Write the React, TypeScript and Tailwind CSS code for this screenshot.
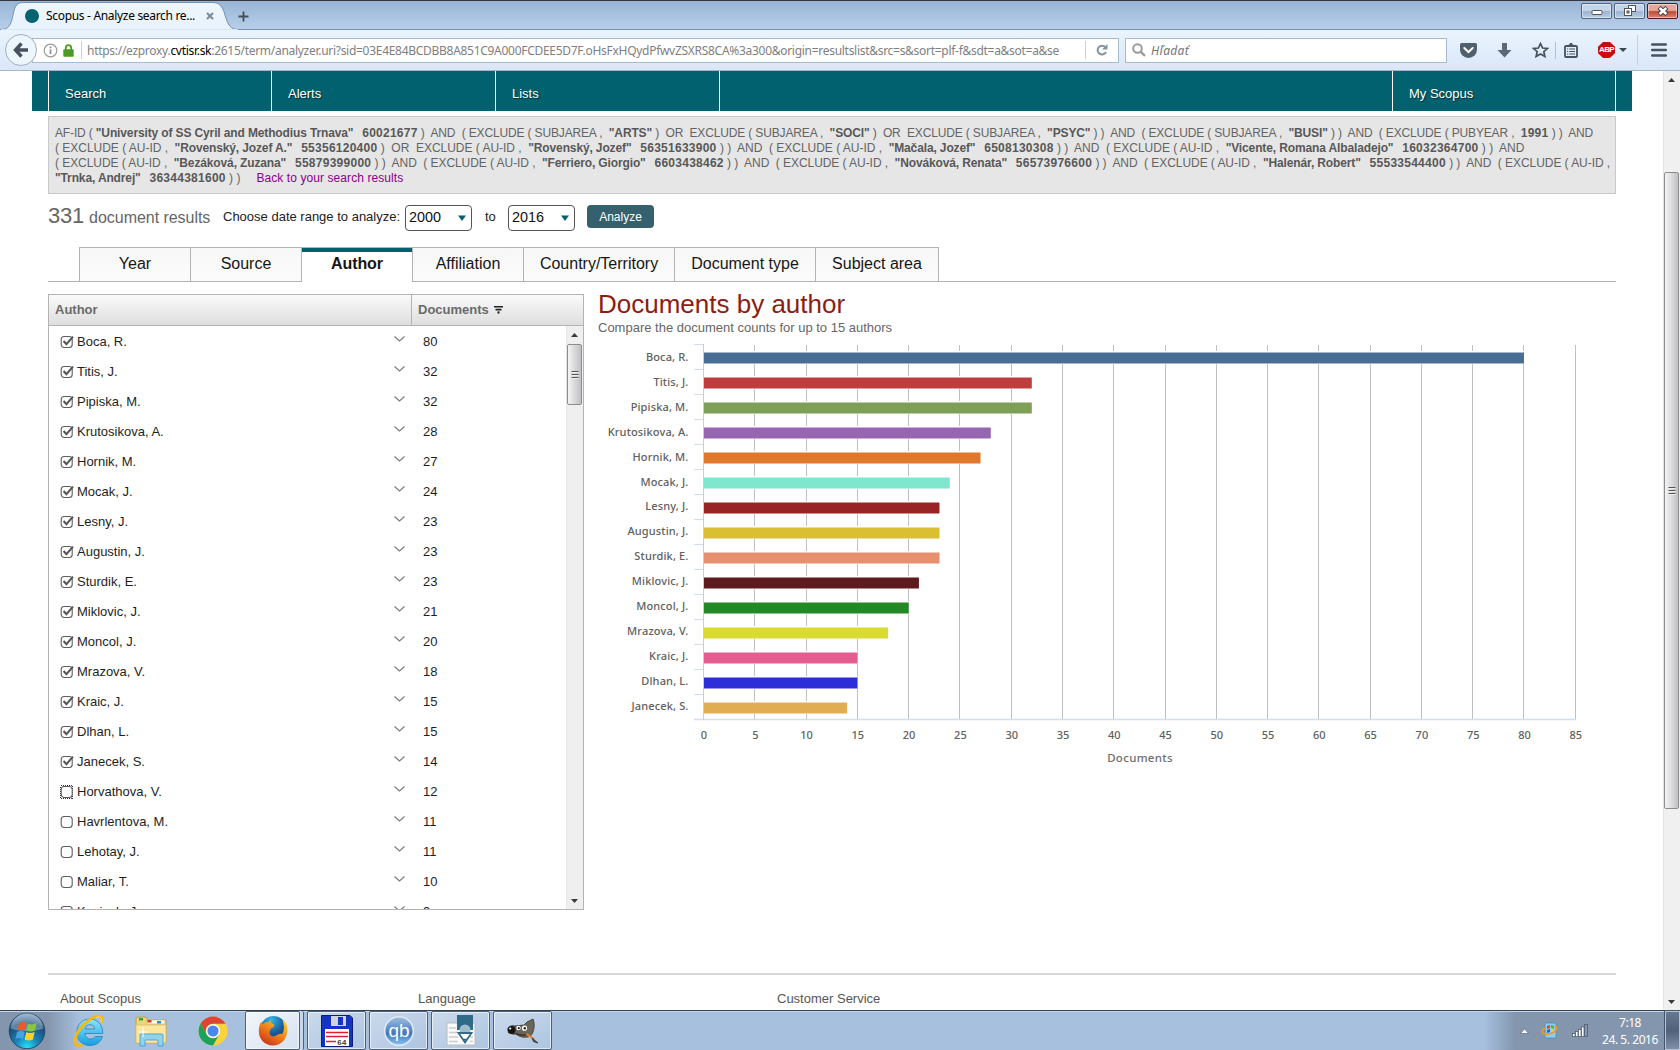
import React from "react";

const authors: { name: string; docs: number; color?: string }[] = [
  { name: "Boca, R.", docs: 80, color: "#4a6d94" },
  { name: "Titis, J.", docs: 32, color: "#c03d3d" },
  { name: "Pipiska, M.", docs: 32, color: "#7e9f56" },
  { name: "Krutosikova, A.", docs: 28, color: "#9766b0" },
  { name: "Hornik, M.", docs: 27, color: "#de782c" },
  { name: "Mocak, J.", docs: 24, color: "#7fe7ce" },
  { name: "Lesny, J.", docs: 23, color: "#992425" },
  { name: "Augustin, J.", docs: 23, color: "#d9bf31" },
  { name: "Sturdik, E.", docs: 23, color: "#e69070" },
  { name: "Miklovic, J.", docs: 21, color: "#5e1a1c" },
  { name: "Moncol, J.", docs: 20, color: "#238924" },
  { name: "Mrazova, V.", docs: 18, color: "#dadb32" },
  { name: "Kraic, J.", docs: 15, color: "#e35d91" },
  { name: "Dlhan, L.", docs: 15, color: "#2e2ed9" },
  { name: "Janecek, S.", docs: 14, color: "#e1ad52" },
  { name: "Horvathova, V.", docs: 12 },
  { name: "Havrlentova, M.", docs: 11 },
  { name: "Lehotay, J.", docs: 11 },
  { name: "Maliar, T.", docs: 10 },
  { name: "Kozisek, J.", docs: 9 },
];

/* ---------- browser chrome ---------- */

function WindowButton({ kind }: { kind: "min" | "max" | "close" }) {
  return (
    <div
      className={
        "flex h-[16px] w-[31px] items-center justify-center rounded-[2px] border shadow-[inset_0_0_0_1px_rgba(255,255,255,0.45)] " +
        (kind === "close"
          ? "border-[#4c1a22] bg-linear-to-b from-[#e7a79c] from-45% via-[#bd4a35] via-55% to-[#d98674]"
          : "border-[#52657f] bg-linear-to-b from-[#c5d5e8] from-45% via-[#9db4d1] via-55% to-[#b9cee6]")
      }
    >
      <svg width="14" height="12" viewBox="0 0 14 12">
        {kind === "min" && <rect x="2" y="5.5" width="10" height="4" rx="1" fill="#fff" stroke="#51545c" />}
        {kind === "max" && (
          <g fill="#fff" stroke="#51545c">
            <rect x="5.5" y="0.5" width="7" height="6" />
            <rect x="1.5" y="3.5" width="7" height="7" />
            <rect x="4" y="6" width="2" height="2" fill="#8ea4c0" />
          </g>
        )}
        {kind === "close" && (
          <g>
            <path d="M3 2.5L11 9.5M11 2.5L3 9.5" stroke="#4a4148" strokeWidth="4.4" />
            <path d="M3.6 3L10.4 9M10.4 3L3.6 9" stroke="#fff" strokeWidth="2.4" />
          </g>
        )}
      </svg>
    </div>
  );
}

function TabStrip() {
  return (
    <div className="relative flex h-[30px] shrink-0 items-start border-t border-b border-t-[#37383d] border-b-[#7391b1] bg-linear-to-b from-[#99b4d5] to-[#b7cfea]">
      <svg className="absolute -bottom-px left-0" width="240" height="28" viewBox="0 0 240 28">
        <defs>
          <linearGradient id="tab" x1="0" y1="0" x2="0" y2="1">
            <stop offset="0" stopColor="#eff6fc" />
            <stop offset="1" stopColor="#e8f2fc" />
          </linearGradient>
        </defs>
        <path
          d="M0 27.5 C9 27.5 11 23 13 13 C15 3 17 0.5 24 0.5 L212 0.5 C219 0.5 222 3 225 13 C228 23 230 27.5 239 27.5 L239 28 L0 28Z"
          fill="url(#tab)"
          stroke="#7391b1"
          strokeWidth="1"
        />
        <path d="M1 28H238" stroke="#e8f2fc" strokeWidth="1.6" />
      </svg>
      <div className="relative flex h-full w-full items-center pt-[2px]">
        <div className="ml-[25px] h-[14px] w-[14px] rounded-full bg-[#04646f]" />
        <div className="ml-[7px] w-[160px] text-[12px] tracking-[-0.32px] whitespace-nowrap text-black">Scopus - Analyze search re...</div>
        <svg width="8" height="8" viewBox="0 0 8 8">
          <path d="M1 1L7 7M7 1L1 7" stroke="#7f8996" strokeWidth="2" />
        </svg>
        <svg className="ml-[24px]" width="11" height="11" viewBox="0 0 11 11">
          <path d="M5.5 0.5V10.5M0.5 5.5H10.5" stroke="#424f5b" strokeWidth="1.8" />
        </svg>
      </div>
      <div className="absolute top-[2px] right-[2px] flex gap-[2px]">
        <WindowButton kind="min" />
        <WindowButton kind="max" />
        <WindowButton kind="close" />
      </div>
    </div>
  );
}

function Toolbar() {
  return (
    <div className="flex h-[41px] shrink-0 items-center border-b border-[#a3b6cb] bg-linear-to-b from-[#eaf4fd] to-[#dae7f8]">
      <div className="z-10 ml-[5px] flex h-[32px] w-[32px] items-center justify-center rounded-full border border-[#9fb0c3] bg-[#edf5fd]">
        <svg width="16" height="16" viewBox="0 0 16 16">
          <path d="M8.5 1.5L2.5 8L8.5 14.5M3 8H15" fill="none" stroke="#46515d" strokeWidth="3.4" />
        </svg>
      </div>
      <div className="-ml-[5px] flex h-[25px] w-[1087px] items-center border border-[#a6bad0] bg-white">
        <svg className="ml-[10px]" width="15" height="15" viewBox="0 0 15 15">
          <circle cx="7.5" cy="7.5" r="6.3" fill="none" stroke="#9a9a9a" strokeWidth="1.2" />
          <path d="M7.5 6.6V11M7.5 3.6V5.2" stroke="#8c8c8c" strokeWidth="1.7" />
        </svg>
        <svg className="ml-[5px]" width="11" height="13" viewBox="0 0 11 13">
          <path d="M2.8 6V3.8a2.7 2.7 0 0 1 5.4 0V6" fill="none" stroke="#4d9b25" strokeWidth="1.8" />
          <rect x="0.3" y="5.3" width="10.4" height="7.4" rx="1" fill="#4d9b25" />
        </svg>
        <div className="ml-[7px] h-[18px] w-px bg-[#cfcfcf]" />
        <div className="ml-[5px] w-[998px] pt-[2px] text-[12px] tracking-[-0.287px] whitespace-nowrap text-[#808080]">
          https://ezproxy.<span className="text-black">cvtisr.sk</span>:2615/term/analyzer.uri?sid=03E4E84BCDBB8A851C9A000FCDEE5D7F.oHsFxHQydPfwvZSXRS8CA%3a300&amp;origin=resultslist&amp;src=s&amp;sort=plf-f&amp;sdt=a&amp;sot=a&amp;se
        </div>
        <div className="h-[18px] w-px bg-[#cfcfcf]" />
        <svg className="ml-[10px]" width="12" height="12" viewBox="0 0 12 12">
          <path d="M9.4 3.2A4.4 4.4 0 1 0 10 8" fill="none" stroke="#8393a1" strokeWidth="2" />
          <path d="M11.5 0V5.5H6Z" fill="#8393a1" />
        </svg>
      </div>
      <div className="ml-[6px] flex h-[25px] w-[322px] items-center border border-[#a6bad0] bg-white">
        <svg className="ml-[6px]" width="14" height="14" viewBox="0 0 14 14">
          <circle cx="5.5" cy="5.5" r="4.3" fill="none" stroke="#9b9b9b" strokeWidth="2" />
          <path d="M8.6 8.6L13 13" stroke="#9b9b9b" strokeWidth="2.4" />
        </svg>
        <span className="ml-[5px] pt-[2px] text-[12px] tracking-[0.3px] text-[#757575] italic">Hľadať</span>
      </div>
      <svg className="ml-[13px]" width="17" height="15" viewBox="0 0 17 15">
        <path d="M1.5 0H15.5Q17 0 17 1.5V6.5A8.5 8.5 0 0 1 0 6.5V1.5Q0 0 1.5 0Z" fill="#51606e" />
        <path d="M4.3 5L8.5 9L12.7 5" fill="none" stroke="#fff" strokeWidth="2" strokeLinecap="round" />
      </svg>
      <svg className="ml-[20px]" width="15" height="15" viewBox="0 0 15 15">
        <path d="M5 0H10V7H14.5L7.5 14.5L0.5 7H5Z" fill="#5b6875" />
      </svg>
      <svg className="ml-[20px]" width="17" height="16" viewBox="0 0 17 16">
        <path d="M8.5 1.6L10.6 6L15.4 6.5L11.8 9.7L12.9 14.5L8.5 12L4.1 14.5L5.2 9.7L1.6 6.5L6.4 6Z" fill="none" stroke="#46535f" strokeWidth="1.7" />
      </svg>
      <div className="ml-[6px] h-[17px] w-px bg-[#b3bfcc]" />
      <svg className="ml-[8px]" width="14" height="15" viewBox="0 0 14 15">
        <rect x="1" y="3" width="12" height="11" rx="1" fill="none" stroke="#46535f" strokeWidth="1.8" />
        <path d="M4.5 3V1.5H5.5L6 0H8L8.5 1.5H9.5V3Z" fill="#46535f" />
        <path d="M3 6H4.2M5.3 6H11M3 8.5H4.2M5.3 8.5H11M3 11H4.2M5.3 11H11" stroke="#46535f" strokeWidth="1.2" />
      </svg>
      <div className="ml-[20px] flex h-[16px] w-[17px] items-center justify-center bg-[#c70d0d] [clip-path:polygon(30%_0,70%_0,100%_30%,100%_70%,70%_100%,30%_100%,0_70%,0_30%)]">
        <span className="font-[Liberation_Sans,Arial,sans-serif] text-[8px] font-bold tracking-[-0.6px] text-white">ABP</span>
      </div>
      <svg className="ml-[4px]" width="8" height="4" viewBox="0 0 8 4">
        <path d="M0 0H8L4 4Z" fill="#3c4650" />
      </svg>
      <div className="ml-[10px] h-[30px] w-px bg-[#c3d0de]" />
      <svg className="ml-[13px]" width="16" height="14" viewBox="0 0 16 14">
        <path d="M1.2 1.5H14.8M1.2 7H14.8M1.2 12.5H14.8" stroke="#46525e" strokeWidth="2.6" strokeLinecap="round" />
      </svg>
    </div>
  );
}

/* ---------- page content ---------- */

function NavBar() {
  return (
    <div className="ml-[32px] flex h-[40px] w-[1600px] items-center bg-[#02616e] pl-[16px] text-[13px] text-white [text-shadow:1px_1px_1px_#003038]">
      <div className="flex h-full w-[223px] shrink-0 items-center border-l border-white pt-[5px] pl-[16px]">Search</div>
      <div className="flex h-full w-[224px] shrink-0 items-center border-l border-white pt-[5px] pl-[16px]">Alerts</div>
      <div className="flex h-full w-[224px] shrink-0 items-center border-l border-white pt-[5px] pl-[16px]">Lists</div>
      <div className="h-full w-[673px] shrink-0 border-l border-white" />
      <div className="flex h-full w-[224px] shrink-0 items-center border-r border-l border-white pt-[5px] pl-[16px]">My Scopus</div>
    </div>
  );
}

/* Quoted search term, optionally followed by its numeric identifier. */
function Term({ name, id }: { name?: string; id?: string }) {
  return (
    <b className="text-[#585858]">
      {name && <span className="tracking-[-0.13px]">{'"' + name + '"'}</span>}
      {name && id && <span className="tracking-[-0.4px]">{"   "}</span>}
      {id && <span className="tracking-[0.26px]">{id}</span>}
    </b>
  );
}

function Query() {
  return (
    <div className="mt-[5px] ml-[48px] h-[78px] w-[1568px] border border-[#c9c9c9] bg-[#e6e6e6] pt-[9px] pl-[6px] text-[12px] leading-[15px] whitespace-pre text-[#646464]">
      <div className="tracking-[-0.15px]">
        {"AF-ID ( "}<Term name="University of SS Cyril and Methodius Trnava" id="60021677" />{" )  AND  ( EXCLUDE ( SUBJAREA ,  "}<Term name="ARTS" />
        {" )  OR  EXCLUDE ( SUBJAREA ,  "}<Term name="SOCI" />{" )  OR  EXCLUDE ( SUBJAREA ,  "}<Term name="PSYC" />{" ) )  AND  ( EXCLUDE ( SUBJAREA ,  "}
        <Term name="BUSI" />{" ) )  AND  ( EXCLUDE ( PUBYEAR ,  "}<Term id="1991" />{" ) )  AND"}
      </div>
      <div className="tracking-[-0.02px]">
        {"( EXCLUDE ( AU-ID ,  "}<Term name="Rovenský, Jozef A." id="55356120400" />{" )  OR  EXCLUDE ( AU-ID ,  "}<Term name="Rovenský, Jozef" id="56351633900" />
        {" ) )  AND  ( EXCLUDE ( AU-ID ,  "}<Term name="Mačala, Jozef" id="6508130308" />{" ) )  AND  ( EXCLUDE ( AU-ID ,  "}
        <Term name="Vicente, Romana Albaladejo" id="16032364700" />{" ) )  AND"}
      </div>
      <div className="tracking-[-0.06px]">
        {"( EXCLUDE ( AU-ID ,  "}<Term name="Bezáková, Zuzana" id="55879399000" />{" ) )  AND  ( EXCLUDE ( AU-ID ,  "}<Term name="Ferriero, Giorgio" id="6603438462" />
        {" ) )  AND  ( EXCLUDE ( AU-ID ,  "}<Term name="Nováková, Renata" id="56573976600" />{" ) )  AND  ( EXCLUDE ( AU-ID ,  "}
        <Term name="Halenár, Robert" id="55533544400" />{" ) )  AND  ( EXCLUDE ( AU-ID ,"}
      </div>
      <div>
        <Term name="Trnka, Andrej" id="36344381600" />{" ) )"}
        <span className="ml-[16px] tracking-[0.08px] text-[#8b008b]">Back to your search results</span>
      </div>
    </div>
  );
}

function YearSelect({ value }: { value: string }) {
  return (
    <div className="flex h-[26px] w-[67px] items-center justify-between rounded-[4px] border border-[#555] bg-white pr-[5px] pl-[3px] text-[14.4px] text-[#111]">
      {value}
      <svg width="8" height="6" viewBox="0 0 8 6">
        <path d="M0 0.5H8L4 6Z" fill="#02616e" />
      </svg>
    </div>
  );
}

function DateRange() {
  return (
    <div className="mt-[11px] ml-[48px] flex h-[26px] items-center text-[13px] text-[#222]">
      <div className="-mt-[6px] flex w-[175px] items-baseline text-[#666]">
        <span className="text-[22px] tracking-[-0.2px]">331</span>
        <span className="ml-[5px] text-[16px] tracking-[-0.04px] whitespace-nowrap">document results</span>
      </div>
      <span className="-mt-[2px] w-[182px] whitespace-nowrap">Choose date range to analyze:</span>
      <YearSelect value="2000" />
      <span className="-mt-[2px] w-[36px] pl-[13px]">to</span>
      <YearSelect value="2016" />
      <div className="-mt-[3px] ml-[12px] flex h-[23px] w-[67px] items-center justify-center rounded-[4px] bg-[#34616d] text-[12px] text-white">Analyze</div>
    </div>
  );
}

const tabs: { label: string; width: string; active?: boolean }[] = [
  { label: "Year", width: "w-[111px]" },
  { label: "Source", width: "w-[111px]" },
  { label: "Author", width: "w-[111px]", active: true },
  { label: "Affiliation", width: "w-[111px]" },
  { label: "Country/Territory", width: "w-[151px]" },
  { label: "Document type", width: "w-[141px]" },
  { label: "Subject area", width: "w-[123px]" },
];

function Tabs() {
  return (
    <div className="mt-[16px] ml-[48px] flex h-[35px] w-[1568px]">
      <div className="w-[31px] border-b border-[#b3b3b3]" />
      {tabs.map((t) => (
        <div
          key={t.label}
          className={
            "flex items-center justify-center border-l border-[#b3b3b3] text-[16px] text-[#161616] " +
            t.width +
            (t.active
              ? " border-t border-t-[#b3b3b3] pb-[3px] font-bold tracking-[-0.1px] shadow-[inset_0_4px_0_#02616e]"
              : " border-t border-b bg-linear-to-b from-[#f7f7f7] to-[#fbfbfb] pb-[2px]")
          }
        >
          {t.label}
        </div>
      ))}
      <div className="flex-1 border-b border-l border-[#b3b3b3]" />
    </div>
  );
}

function CheckBox({ checked, focused }: { checked: boolean; focused: boolean }) {
  return (
    <svg width="14" height="14" viewBox="0 0 14 14">
      {focused && <rect x="0.5" y="0.5" width="12" height="13" fill="none" stroke="#333" strokeDasharray="1 1" shapeRendering="crispEdges" />}
      <rect x="1.2" y="1.5" width="11" height="11" rx="3" fill="#fff" stroke="#5e5e5e" strokeWidth="1.1" />
      {checked && <path d="M3.6 6L6.4 9.2L13 1.6" fill="none" stroke="#555" strokeWidth="2" />}
    </svg>
  );
}

function Arrow({ down }: { down?: boolean }) {
  return (
    <svg width="7" height="4" viewBox="0 0 7 4">
      <path d={down ? "M0 0H7L3.5 4Z" : "M0 4H7L3.5 0Z"} fill="#3a3a3a" />
    </svg>
  );
}

function Grip() {
  return (
    <svg width="8" height="8" viewBox="0 0 8 8">
      <path d="M0.5 0.5H7.5M0.5 3.5H7.5M0.5 6.5H7.5" stroke="#555" />
      <path d="M0.5 1.5H7.5M0.5 4.5H7.5M0.5 7.5H7.5" stroke="#eee" />
    </svg>
  );
}

function AuthorTable() {
  return (
    <div className="flex h-[616px] w-[536px] flex-col border border-[#b3b3b3] bg-white">
      <div className="flex h-[31px] shrink-0 border-b border-[#b3b3b3] bg-linear-to-b from-[#fafafa] to-[#dedede] text-[13px] font-bold text-[#6a6a6a]">
        <div className="flex w-[363px] items-center border-r border-[#b3b3b3] pl-[6px]">Author</div>
        <div className="flex items-center gap-[5px] pl-[6px]">
          Documents
          <svg width="9" height="8" viewBox="0 0 9 8">
            <path d="M0 0.8H9M1.5 3.6H7.5" stroke="#222" strokeWidth="1.6" />
            <path d="M3.5 5.4H5.5V7.6H3.5Z" fill="#222" />
          </svg>
        </div>
      </div>
      <div className="flex min-h-0 flex-1">
        <div className="min-w-0 flex-1 overflow-hidden text-[13px] text-[#1e1e1e]">
          {authors.map((a, i) => (
            <div key={a.name} className="flex h-[30px] items-center">
              <div className="ml-[11px] pt-[1px]">
                <CheckBox checked={i < 15} focused={i === 15} />
              </div>
              <span className="ml-[3px] w-[317px] pt-[2px]">{a.name}</span>
              <svg className="-mt-[5px]" width="11" height="6" viewBox="0 0 11 6">
                <path d="M0.5 0.5L5.5 5L10.5 0.5" fill="none" stroke="#7c7c7c" strokeWidth="1.2" />
              </svg>
              <span className="ml-[18px] pt-[2px]">{a.docs}</span>
            </div>
          ))}
        </div>
        <div className="flex w-[17px] flex-col items-center border-l border-[#e6e6e6] bg-[#efefef] pr-px">
          <div className="flex h-[18px] items-center">
            <Arrow />
          </div>
          <div className="flex h-[61px] w-[15px] items-center justify-center rounded-[2px] border border-[#8d8d8d] bg-linear-to-r from-[#f4f4f4] via-[#d9d9db] to-[#c0c0c4]">
            <Grip />
          </div>
          <div className="flex-1" />
          <div className="flex h-[17px] items-center">
            <Arrow down />
          </div>
        </div>
      </div>
    </div>
  );
}

const AXIS_X = 105.5;
const UNIT = 10.256;
const CHART_TOP = 0.5;

function Chart() {
  const ticks = Array.from({ length: 18 }, (_, i) => i * 5);
  return (
    <svg className="mt-[8px] block font-[Noto_Sans,sans-serif] text-[11px]" width="1018" height="425" viewBox="0 0 1018 425">
      {ticks.slice(1).map((t) => (
        <path key={t} d={`M${Math.round(AXIS_X - 0.5 + t * UNIT) + 0.5} 1V376`} stroke="#c0c0c0" />
      ))}
      {authors.slice(0, 15).map((a, i) => {
        const y = CHART_TOP + i * 25;
        return (
          <g key={a.name}>
            <path d={`M96 ${y}H105`} stroke="#d3dfec" strokeWidth="1.2" />
            <rect x={AXIS_X} y={y + 6.5} width={a.docs * UNIT} height="13" fill="#fff" />
            <rect x={AXIS_X} y={y + 7.5} width={a.docs * UNIT} height="12" fill={a.color} opacity="0.5" />
            <rect x={AXIS_X} y={y + 8.5} width={a.docs * UNIT} height="10" fill={a.color} />
            <text x="90.5" y={y + (i < 6 ? 16 : 15)} textAnchor="end" fill="#606060" fontWeight="500" letterSpacing="0.15">
              {a.name}
            </text>
          </g>
        );
      })}
      <path d="M96 375.5H978" stroke="#d3dfec" strokeWidth="1.4" />
      <path d={`M${AXIS_X} 0V376`} stroke="#c0d0e0" />
      {ticks.map((t) => (
        <text key={t} x={AXIS_X + 0.5 + t * UNIT} y="395" textAnchor="middle" fill="#606060" fontWeight="500">
          {t}
        </text>
      ))}
      <text x="542" y="418" textAnchor="middle" fill="#6d6d6d" fontSize="11.5" fontWeight="500" letterSpacing="0.3">
        Documents
      </text>
    </svg>
  );
}

function PageScrollbar() {
  return (
    <div className="flex w-[17px] shrink-0 flex-col items-center border-l border-[#e4e4e4] bg-[#f0f0f0] pr-px">
      <div className="flex h-[18px] items-center">
        <Arrow />
      </div>
      <div className="mt-[83px] flex h-[637px] w-[15px] items-center justify-center rounded-[2px] border border-[#8d8d8d] bg-linear-to-r from-[#f4f4f4] via-[#dcdcde] to-[#c0c0c4]">
        <Grip />
      </div>
      <div className="flex-1" />
      <div className="flex h-[17px] items-center">
        <Arrow down />
      </div>
    </div>
  );
}

function Page() {
  return (
    <div className="flex min-h-0 flex-1 bg-white font-[Liberation_Sans,Arial,sans-serif]">
      <div className="flex min-w-0 flex-1 flex-col overflow-hidden">
        <NavBar />
        <Query />
        <DateRange />
        <Tabs />
        <div className="mt-[12px] ml-[48px] flex">
          <AuthorTable />
          <div className="ml-[14px]">
            <h1 className="-mt-[6px] h-[30px] text-[26px] leading-[32px] text-[#8c1d12]">Documents by author</h1>
            <p className="mt-[2px] h-[16px] text-[13px] leading-[16px] text-[#666]">Compare the document counts for up to 15 authors</p>
            <Chart />
          </div>
        </div>
        <div className="mt-[63px] ml-[48px] flex w-[1568px] border-t-2 border-[#d9d9d9] pt-[14px] pl-[12px] text-[13px] text-[#555]">
          <span className="w-[358px]">About Scopus</span>
          <span className="w-[359px]">Language</span>
          <span>Customer Service</span>
        </div>
      </div>
      <PageScrollbar />
    </div>
  );
}

/* ---------- task bar ---------- */

function StartOrb() {
  return (
    <svg width="38" height="38" viewBox="0 0 38 38">
      <defs>
        <radialGradient id="orb" cx="0.5" cy="0.95" r="0.9">
          <stop offset="0" stopColor="#1fe2fb" />
          <stop offset="0.35" stopColor="#1b86b8" />
          <stop offset="0.75" stopColor="#1a4a78" />
          <stop offset="1" stopColor="#6c94b8" />
        </radialGradient>
      </defs>
      <circle cx="19" cy="19" r="17.8" fill="url(#orb)" stroke="#29486a" />
      <path d="M3 17A16 16 0 0 1 35 17Q19 21 3 17Z" fill="#fff" opacity="0.3" />
      <path d="M11 11.5Q14.5 9 18.5 11L17 18.3Q13 16.5 9.3 18.5Z" fill="#ee5a24" />
      <path d="M20 11.7Q24 13.5 28.5 11L27 18.3Q23 20.5 18.5 18.6Z" fill="#8cc63e" />
      <path d="M9 20Q12.8 18 16.6 20L15 27Q11 25 7.5 27Z" fill="#45a3e5" />
      <path d="M18.2 20.3Q22.5 22 26.6 20L25 27.5Q21 29.3 16.6 27.4Z" fill="#fdd12f" />
    </svg>
  );
}

function ExplorerE() {
  return (
    <svg width="32" height="34" viewBox="0 0 32 34">
      <defs>
        <linearGradient id="ie" x1="0" y1="0" x2="0" y2="1">
          <stop offset="0" stopColor="#8fe3fb" />
          <stop offset="1" stopColor="#169fe0" />
        </linearGradient>
      </defs>
      <path
        d="M16.5 5C24 5 29.8 10 29.8 19.5H12C12.3 23 14.5 25 17.5 25C20 25 21.5 24 22.3 22.5H29.5C27.8 28.5 23 31.5 17 31.5C9 31.5 3.8 26 3.8 18.3C3.8 10.5 9.3 5 16.5 5ZM12.2 15H21.7C21.3 12 19.6 10.7 17 10.7C14.4 10.7 12.7 12.2 12.2 15Z"
        fill="url(#ie)"
        stroke="#2584bc"
        strokeWidth="0.8"
      />
      <path d="M28.5 8.5C30.5 4 28 1 23 2.5C14 5.5 3.5 16.5 2 26C1.3 31.5 5 33 9.5 30.5" fill="none" stroke="#f5b90f" strokeWidth="2.8" />
      <path d="M28 8C29.5 4 27 2 23 3.5" fill="none" stroke="#ffe36b" strokeWidth="1" />
    </svg>
  );
}

function FolderIcon() {
  return (
    <svg width="34" height="32" viewBox="0 0 34 32">
      <path d="M2 4L3 2H12L14 5H32V26Q32 28 30 28H3Q2 28 2 26Z" fill="#efd47c" stroke="#c3a04b" />
      <path d="M13 5H31V9H13Z" fill="#fff" stroke="#c9b778" strokeWidth="0.8" />
      <rect x="5" y="3" width="4" height="2.5" fill="#1faf3a" />
      <rect x="13.5" y="5" width="4" height="2.5" fill="#d63a2a" />
      <rect x="23" y="6" width="4" height="2.5" fill="#2a8fe0" />
      <path d="M2 10H32V26Q32 28 30 28H3Q2 28 2 26Z" fill="#f9e7a0" stroke="#d9bf6a" strokeWidth="0.8" />
      <path d="M6 31V20Q6 19 7 19H28Q29 19 29 20V31H24V26Q24 25 23 25H12Q11 25 11 26V31Z" fill="#8fd3ee" stroke="#4d9fc4" strokeWidth="0.9" />
      <path d="M9 12V22M4.5 17H14" stroke="#fff" strokeWidth="1" />
    </svg>
  );
}

function ChromeIcon() {
  return (
    <svg width="30" height="30" viewBox="0 0 30 30">
      <circle cx="15" cy="15" r="14.5" fill="#fdd23f" />
      <path d="M2.45 7.75A14.5 14.5 0 0 1 27.55 7.75H15A7.25 7.25 0 0 0 8.7 18.6Z" fill="#dc4434" />
      <path d="M2.45 7.75A14.5 14.5 0 0 0 15 29.5L21.3 18.6A7.25 7.25 0 0 1 8.7 18.6Z" fill="#1ba25c" />
      <circle cx="15" cy="15" r="7" fill="#fff" />
      <circle cx="15" cy="15" r="5.6" fill="#4a86ee" />
    </svg>
  );
}

function FirefoxIcon() {
  return (
    <svg width="30" height="31" viewBox="0 0 30 31">
      <defs>
        <linearGradient id="fx" x1="0.9" y1="0" x2="0.2" y2="1">
          <stop offset="0" stopColor="#fcd52d" />
          <stop offset="0.45" stopColor="#f38a1c" />
          <stop offset="1" stopColor="#c92e1a" />
        </linearGradient>
        <radialGradient id="globe" cx="0.4" cy="0.15" r="0.9">
          <stop offset="0" stopColor="#32b7e6" />
          <stop offset="0.6" stopColor="#1b5793" />
          <stop offset="1" stopColor="#162a63" />
        </radialGradient>
      </defs>
      <circle cx="15.5" cy="14" r="13" fill="url(#globe)" />
      <path
        d="M26.5 6C29 9 29.7 12 29.4 16.5C28.5 25 22.5 30.5 15 30.5C6.5 30.5 0.8 24 0.8 16C0.8 12 2 9 3 6.5L4.5 9.3C6 7.5 8 7 10.5 7.3L12.7 5C12.7 7 13.5 8.6 16 9.5C17 11 16 12 13 13.5C12 14.5 12.5 15.5 11.5 16.5C11 20 14 22 17 21C20 20 21 18 24 19C26.5 15.5 26.5 11 24.5 5Z"
        fill="url(#fx)"
      />
    </svg>
  );
}

function FloppyIcon() {
  return (
    <svg width="32" height="32" viewBox="0 0 32 32">
      <path d="M0.5 0.5H29L31.5 3V31.5H0.5Z" fill="#1733c4" stroke="#0b1c80" />
      <rect x="10" y="1" width="15" height="10" fill="#cfd3da" />
      <rect x="17" y="2" width="5" height="8" fill="#1733c4" />
      <rect x="4" y="14" width="24" height="17" fill="#fff" />
      <path d="M5 17.5H27M5 21.5H27M5 26.5H15" stroke="#e11d34" strokeWidth="1.4" />
      <text x="16" y="29.5" fontSize="8" fontWeight="700" fill="#444" fontFamily="Liberation Mono, monospace">64</text>
    </svg>
  );
}

function QbIcon() {
  return (
    <svg width="32" height="32" viewBox="0 0 32 32">
      <defs>
        <linearGradient id="qb" x1="0" y1="0" x2="0" y2="1">
          <stop offset="0" stopColor="#a3c1e2" />
          <stop offset="0.6" stopColor="#3f77bd" />
          <stop offset="1" stopColor="#8cc5f5" />
        </linearGradient>
      </defs>
      <circle cx="16" cy="16" r="14.3" fill="url(#qb)" stroke="#dfe9f4" strokeWidth="1.6" />
      <text x="16" y="21.5" textAnchor="middle" fontSize="19" fill="#fff" fontFamily="Liberation Sans, sans-serif">qb</text>
    </svg>
  );
}

function EditorIcon() {
  return (
    <svg width="30" height="32" viewBox="0 0 30 32">
      <rect x="1" y="8" width="28" height="22" fill="#fbfbfb" stroke="#b9bcc0" />
      <path d="M3 13H10M3 17.5H12M3 22H12M3 26.5H12M24 26.5H27M24 22H27" stroke="#c9ccd0" strokeWidth="1.4" />
      <path d="M11 0H27V15H11Z" fill="#2f6a88" />
      <circle cx="19" cy="15" r="5.5" fill="#9dbdcd" />
      <path d="M12.500 18L19 27.5L25.5 18Z" fill="#fff" stroke="#2f6a88" strokeWidth="1.8" />
      <path d="M17.300 23.8H20.700L19 26.500Z" fill="#2f6a88" />
    </svg>
  );
}

function GimpIcon() {
  return (
    <svg width="32" height="26" viewBox="0 0 32 26">
      <path d="M8 8C11 7.5 14 7.5 17 7L20 4L26 1C28 6 27.5 13 24 17.5C20 20.5 13 19.5 9 16C4 17 1 14 1 11.5C1.5 8 5 7 8 8Z" fill="#6b6459" stroke="#37322c" strokeWidth="0.8" />
      <circle cx="4.5" cy="12" r="4" fill="#151515" />
      <circle cx="3.2" cy="10.5" r="1.1" fill="#fff" />
      <circle cx="11.5" cy="10" r="2.2" fill="#fff" />
      <circle cx="17.5" cy="10.2" r="2.6" fill="#fff" />
      <circle cx="11.8" cy="10.2" r="1.1" fill="#222" />
      <circle cx="17.8" cy="10.3" r="1.2" fill="#222" />
      <path d="M9 15.5Q14 18 20 16.5" fill="none" stroke="#2a2622" strokeWidth="1.2" />
      <path d="M19.5 16L27 21" fill="none" stroke="#e48a2b" strokeWidth="2" />
      <path d="M25 20L31 25L26.5 23.5Z" fill="#444" stroke="#444" />
    </svg>
  );
}

function TaskButton({ children, active }: { children: React.ReactNode; active?: boolean }) {
  return (
    <div
      className={
        "flex h-[39px] items-center justify-center rounded-[2px] border border-[#4d6079] shadow-[inset_0_0_0_1px_rgba(255,255,255,0.6)] " +
        (active ? "w-[55px] bg-linear-to-br from-[#f3f6fb] to-[#d5e2f1]" : "w-[59px] bg-linear-to-br from-[#cbdaec] to-[#adc4e0]")
      }
    >
      {children}
    </div>
  );
}

function Taskbar() {
  return (
    <div className="flex h-[40px] shrink-0 items-center border-t border-[#2f4258] bg-[linear-gradient(90deg,#8396ae_0,#8396ae_48px,#a7c0de_80px,#a7c0de_1484px,#8396ae_1515px,#8396ae_100%)] text-white shadow-[inset_0_1px_0_#c3d6ea]">
      <div className="w-[73px] pl-[8px]"><StartOrb /></div>
      <div className="w-[61px]"><ExplorerE /></div>
      <div className="w-[64px]"><FolderIcon /></div>
      <div className="w-[47px]"><ChromeIcon /></div>
      <TaskButton active><FirefoxIcon /></TaskButton>
      <div className="mr-[3px] h-[39px] w-[4px] rounded-r-[2px] border-r border-[#4d6079] bg-[#c8d8ea]" />
      <div className="flex gap-[3px]">
        <TaskButton><FloppyIcon /></TaskButton>
        <TaskButton><QbIcon /></TaskButton>
        <TaskButton><EditorIcon /></TaskButton>
        <TaskButton><GimpIcon /></TaskButton>
      </div>
      <div className="flex-1" />
      <svg width="9" height="6" viewBox="0 0 9 6">
        <path d="M0.5 5.5H8.5L4.5 0.8Z" fill="#fff" stroke="#4c5b70" strokeWidth="0.6" />
      </svg>
      <svg className="ml-[12px]" width="17" height="17" viewBox="0 0 17 17">
        <rect x="4" y="1" width="11" height="15" rx="1" fill="#8fcdf0" stroke="#4487b5" strokeWidth="0.7" />
        <path d="M6 4L9 3V6L6 7Z" fill="#e0491f" />
        <path d="M10 3L13 4V7L10 6Z" fill="#5fae2e" />
        <path d="M6 8L9 7V10L6 11Z" fill="#2466c8" />
        <path d="M10 7L13 8V11L10 10Z" fill="#f4cf25" />
        <path d="M14 3.5Q18 6 13 10Q6 14 1.5 11Q0 8.500 4 6" fill="none" stroke="#f09a1c" strokeWidth="1.6" />
      </svg>
      <svg className="ml-[14px]" width="16" height="13" viewBox="0 0 16 13">
        <g fill="#fff" stroke="#42526a" strokeWidth="0.7">
          <rect x="0.5" y="9.5" width="2.5" height="3" />
          <rect x="3.5" y="7.5" width="2.5" height="5" />
          <rect x="6.5" y="5.5" width="2.5" height="7" />
          <rect x="9.5" y="3" width="2.5" height="9.5" />
          <rect x="12.7" y="0.5" width="2.8" height="12" fill="#8b99ab" />
        </g>
      </svg>
      <div className="ml-[14px] w-[56px] text-center text-[12px] leading-[17px] tracking-[-0.45px] whitespace-nowrap">
        <div>7:18</div>
        <div>24. 5. 2016</div>
      </div>
      <div className="ml-[7px] h-[39px] w-[15px] border border-[#b5c3d3] bg-linear-to-b from-[#66788f] via-[#50627a] to-[#7d90a8] outline outline-[#44546a]" />
    </div>
  );
}

export default function App() {
  return (
    <div className="flex h-[1050px] w-[1680px] flex-col overflow-hidden bg-white font-[Noto_Sans,sans-serif]">
      <TabStrip />
      <Toolbar />
      <Page />
      <Taskbar />
    </div>
  );
}
